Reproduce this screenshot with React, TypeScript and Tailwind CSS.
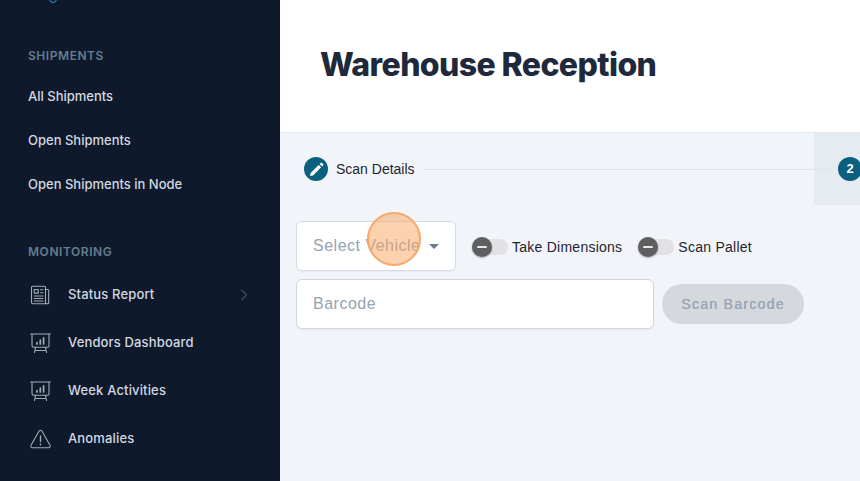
function NewsIcon() {
  return (
    <svg width="20" height="20" viewBox="0 0 20 20" fill="none" stroke="currentColor" strokeWidth="1.1" strokeLinecap="round" strokeLinejoin="round">
      <path d="M15.5 4.5h2.2a1 1 0 0 1 1 1v12a1.3 1.3 0 0 1-1.3 1.3H3a1.5 1.5 0 0 1-1.5-1.5V2.5A1.3 1.3 0 0 1 2.8 1.2h11.4a1.3 1.3 0 0 1 1.3 1.3v15a1.3 1.3 0 0 0 1.3 1.3" />
      <path d="M4.2 4.5h4v3.6h-4z" />
      <path d="M10.5 4.8h2.5M10.5 7.8h2.5M4.2 11h8.8M4.2 13.5h8.8M4.2 16h8.8" />
    </svg>
  );
}

function BoardIcon() {
  return (
    <svg width="21" height="21" viewBox="0 0 21 21" fill="none" stroke="currentColor" strokeWidth="1.1" strokeLinecap="round" strokeLinejoin="round">
      <path d="M0.7 1h19.6" />
      <path d="M2 1v11.5a1.8 1.8 0 0 0 1.8 1.8h13.4a1.8 1.8 0 0 0 1.8-1.8V1" />
      <path d="M5.5 14.5 4.5 19.5M15.5 14.5l1 5M5 17.5h11" />
      <path d="M7 11V9.5M10.3 11V7M13.6 11V4.8" strokeWidth="1.7" />
    </svg>
  );
}

function WarningIcon() {
  return (
    <svg width="21" height="20" viewBox="0 0 22 20" fill="none" stroke="currentColor" strokeWidth="1.1" strokeLinecap="round" strokeLinejoin="round">
      <path d="M9.5 1.6a1.8 1.8 0 0 1 3 0l8.4 15a1.7 1.7 0 0 1-1.5 2.6H2.6a1.7 1.7 0 0 1-1.5-2.6z" />
      <path d="M11 6.8v6" strokeWidth="1.4" />
      <path d="M11 15.6v.4" strokeWidth="1.6" />
    </svg>
  );
}

function ChevronIcon() {
  return (
    <svg width="8" height="12" viewBox="0 0 8 12" fill="none" stroke="#64748b" strokeWidth="1" strokeLinecap="round" strokeLinejoin="round">
      <path d="M1.5 1 6.5 6l-5 5" />
    </svg>
  );
}

function SidebarLink({ label }: { label: string }) {
  return <div className="flex h-[44px] items-center pl-[28px] text-[13px] font-medium text-[#d3d8e0]">{label}</div>;
}

function IconLink({ label, icon, arrow }: { label: string; icon: React.ReactNode; arrow?: boolean }) {
  return (
    <div className="flex h-[48px] items-center pl-[30px] pr-[32px] text-[13px] font-medium tracking-[0.15px] text-[#d3d8e0]">
      <div className="flex w-[38px] items-center text-[#a3abb7]">{icon}</div>
      <span className="flex-1">{label}</span>
      {arrow && <ChevronIcon />}
    </div>
  );
}

function SectionTitle({ label }: { label: string }) {
  return <div className="pl-[28px] text-[12px] font-semibold leading-[16px] tracking-[0.55px] text-[#647d8f]">{label}</div>;
}

function Toggle({ label }: { label: string }) {
  return (
    <div className="flex items-center gap-[4px]">
      <div className="flex h-[16px] w-[36px] items-center rounded-full bg-[#e2e2e4]">
        <div className="flex h-[20px] w-[20px] items-center justify-center rounded-full bg-[#5f5f61] shadow-[0_1px_2px_rgba(0,0,0,0.3)]">
          <div className="h-[2px] w-[10px] rounded-full bg-[#e8e8e8]" />
        </div>
      </div>
      <span className="text-[14px] tracking-[0.25px] text-[#1f2430]">{label}</span>
    </div>
  );
}

export default function App() {
  return (
    <div className="relative flex h-[481px] w-[860px] overflow-hidden font-['Liberation_Sans',sans-serif]">
      <aside className="w-[280px] shrink-0 bg-[#0e1a2c] font-['Inter',sans-serif]">
        <div className="ml-[49px] h-[3px] w-[8px] overflow-hidden">
          <div className="-mt-[5px] h-[8px] w-[8px] rounded-full border border-[#2f8fd0]" />
        </div>
        <div className="mt-[45px]">
          <SectionTitle label="SHIPMENTS" />
        </div>
        <div className="mt-[11px]">
          <SidebarLink label="All Shipments" />
          <SidebarLink label="Open Shipments" />
          <SidebarLink label="Open Shipments in Node" />
        </div>
        <div className="mt-[37px]">
          <SectionTitle label="MONITORING" />
        </div>
        <div className="mt-[11px]">
          <IconLink label="Status Report" icon={<NewsIcon />} arrow />
          <IconLink label="Vendors Dashboard" icon={<BoardIcon />} />
          <IconLink label="Week Activities" icon={<BoardIcon />} />
          <IconLink label="Anomalies" icon={<WarningIcon />} />
        </div>
      </aside>

      <main className="min-w-0 flex-1 bg-[#f1f4f9]">
        <header className="flex h-[133px] items-center border-b border-[#e2e6ee] bg-white pb-[3px] pl-[40px]">
          <h1 className="font-['Inter',sans-serif] text-[32px] font-extrabold tracking-[-0.6px] text-[#1e293b]">Warehouse Reception</h1>
        </header>

        <div className="flex h-[72px] items-center overflow-hidden">
          <div className="flex flex-1 items-center pl-[24px]">
            <div className="flex h-[24px] w-[24px] shrink-0 items-center justify-center rounded-full bg-[#0b5f7f]">
              <svg width="15" height="15" viewBox="0 0 14 14" fill="#fff">
                <path d="M1.5 10.2 9 2.7l2.3 2.3-7.5 7.5-2.8.5z" />
                <path d="M9.9 1.8 10.8 1a1 1 0 0 1 1.4 0l.9.9a1 1 0 0 1 0 1.4l-.9.8z" />
              </svg>
            </div>
            <span className="ml-[8px] text-[14px] text-[#1f2430]">Scan Details</span>
            <div className="ml-[9px] h-px flex-1 bg-[#dfe4ec]" />
          </div>
          <div className="flex h-full w-[46px] shrink-0 items-center bg-[#e6eaf1]">
            <div className="h-px w-[16px] shrink-0 bg-[#dfe4ec]" />
            <div className="ml-[8px] flex h-[24px] w-[24px] shrink-0 items-center justify-center rounded-full bg-[#0b5f7f] text-[13px] font-bold text-white">2</div>
          </div>
        </div>

        <div className="pl-[16px] pt-[16px]">
          <div className="flex items-center">
            <div className="flex h-[50px] w-[160px] items-center justify-between rounded-[6px] border border-[#d5dbe4] bg-white pl-[16px] pr-[16px] shadow-[0_1px_2px_rgba(0,0,0,0.05)]">
              <span className="whitespace-nowrap text-[16px] tracking-[0.5px] text-[#94a3b3]">Select Vehicle</span>
              <div className="mt-[1px] h-0 w-0 shrink-0 border-x-[5px] border-t-[5px] border-x-transparent border-t-[#707a88]" />
            </div>
            <div className="ml-[16px] mt-[2px]">
              <Toggle label="Take Dimensions" />
            </div>
            <div className="ml-[16px] mt-[2px]">
              <Toggle label="Scan Pallet" />
            </div>
          </div>
          <div className="mt-[8px] flex items-center">
            <div className="flex h-[50px] w-[358px] items-center rounded-[6px] border border-[#cfd6e0] bg-white pl-[16px] shadow-[0_1px_2px_rgba(0,0,0,0.05)]">
              <span className="text-[16px] tracking-[0.5px] text-[#94a3b3]">Barcode</span>
            </div>
            <div className="ml-[8px] flex h-[40px] w-[142px] items-center justify-center rounded-full bg-[#d5d8dd] text-[14px] font-normal tracking-[1.3px] text-[#9aa6b7] [text-shadow:0.3px_0_0_#9aa6b7]">
              Scan Barcode
            </div>
          </div>
        </div>
      </main>

      <div className="absolute left-[367px] top-[212px] h-[54px] w-[54px] rounded-full border-2 border-[#f5a868] bg-[#f9a35e]/50" />
    </div>
  );
}
